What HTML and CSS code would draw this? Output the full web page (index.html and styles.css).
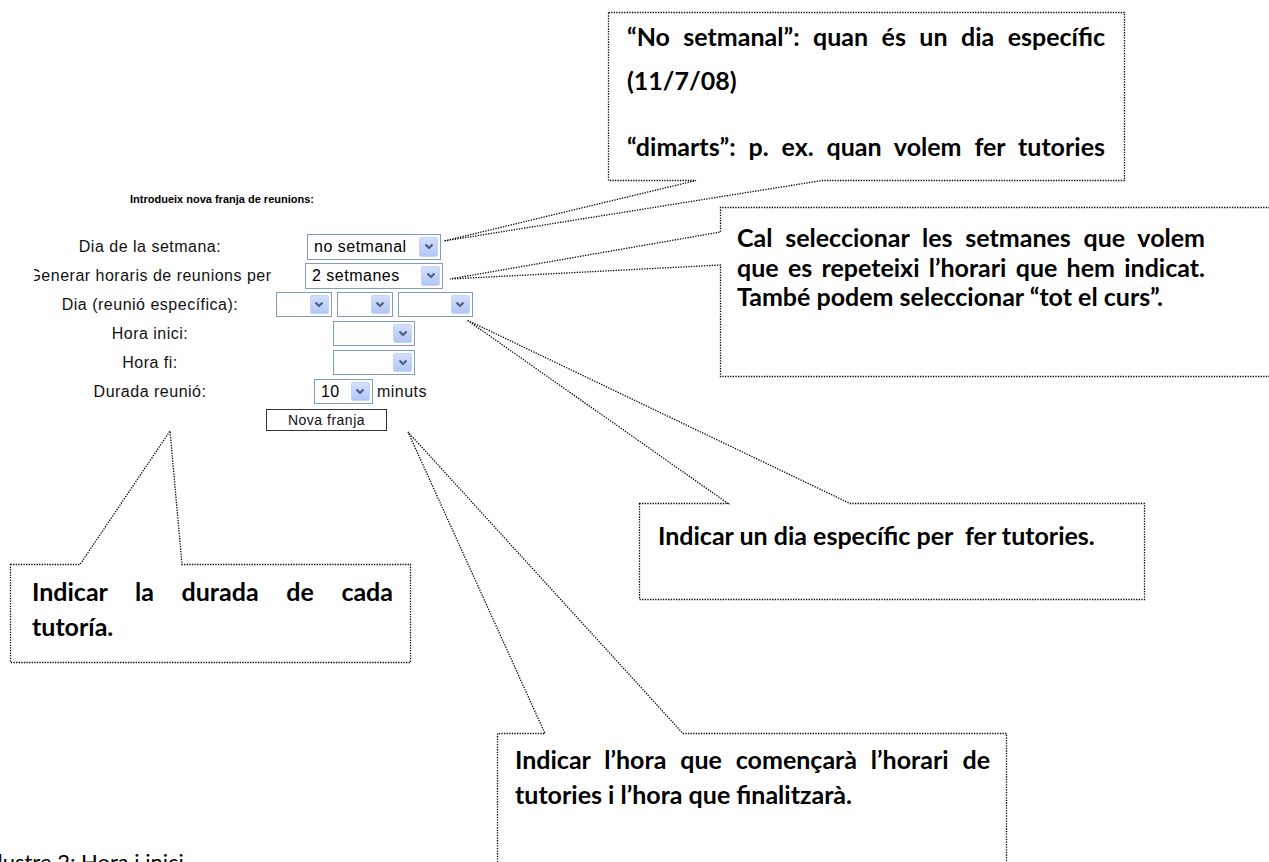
FILE: index.html
```html
<!DOCTYPE html>
<html>
<head>
  <title>Nova franja de reunions</title>
  <meta charset="utf-8">
  <link rel="stylesheet" href="styles.css">
</head>
<body>
<div class="page">

  <div class="shot">
    <h4 class="shot-title">Introdueix nova franja de reunions:</h4>

    <div class="form-grid">
      <div class="label">Dia de la setmana:</div>
      <div class="field">
        <div class="select" style="width:134px"><span class="val">no setmanal</span><span class="arrow"><svg viewBox="0 0 10 7"><path d="M1.5 1.5l3.5 3.5 3.5-3.5"/></svg></span></div>
      </div>

      <div class="label">Generar horaris de reunions per</div>
      <div class="field">
        <div class="select" style="width:138px"><span class="val">2 setmanes</span><span class="arrow"><svg viewBox="0 0 10 7"><path d="M1.5 1.5l3.5 3.5 3.5-3.5"/></svg></span></div>
      </div>

      <div class="label">Dia (reunió específica):</div>
      <div class="field gap5">
        <div class="select small" style="width:56px"><span class="val"></span><span class="arrow"><svg viewBox="0 0 10 7"><path d="M1.5 1.5l3.5 3.5 3.5-3.5"/></svg></span></div>
        <div class="select small" style="width:56px"><span class="val"></span><span class="arrow"><svg viewBox="0 0 10 7"><path d="M1.5 1.5l3.5 3.5 3.5-3.5"/></svg></span></div>
        <div class="select small" style="width:75px"><span class="val"></span><span class="arrow"><svg viewBox="0 0 10 7"><path d="M1.5 1.5l3.5 3.5 3.5-3.5"/></svg></span></div>
      </div>

      <div class="label">Hora inici:</div>
      <div class="field">
        <div class="select small" style="width:82px"><span class="val"></span><span class="arrow"><svg viewBox="0 0 10 7"><path d="M1.5 1.5l3.5 3.5 3.5-3.5"/></svg></span></div>
      </div>

      <div class="label">Hora fi:</div>
      <div class="field">
        <div class="select small" style="width:82px"><span class="val"></span><span class="arrow"><svg viewBox="0 0 10 7"><path d="M1.5 1.5l3.5 3.5 3.5-3.5"/></svg></span></div>
      </div>

      <div class="label">Durada reunió:</div>
      <div class="field durada">
        <div class="select small" style="width:59px"><span class="val">10</span><span class="arrow"><svg viewBox="0 0 10 7"><path d="M1.5 1.5l3.5 3.5 3.5-3.5"/></svg></span></div>
        <span class="unit">minuts</span>
      </div>

      <div class="field field-btn">
        <button class="btn">Nova franja</button>
      </div>
    </div>
  </div>

  <!-- callouts -->
  <div class="note note-1">
    <p class="p1">“No setmanal”: quan és un dia específic (11/7/08)</p>
    <p class="p2">“dimarts”: p. ex. quan volem fer tutories</p>
  </div>

  <div class="note note-2">
    <p>Cal seleccionar les setmanes que volem que es repeteixi l’horari que hem indicat. També podem seleccionar “tot el curs”.</p>
  </div>

  <div class="note note-3">
    <p>Indicar un dia específic per&nbsp; fer tutories.</p>
  </div>

  <div class="note note-4">
    <p>Indicar la durada de cada tutoría.</p>
  </div>

  <div class="note note-5">
    <p>Indicar l’hora que començarà l’horari de tutories i l’hora que finalitzarà.</p>
  </div>

  <svg class="pointers" width="1269" height="862" viewBox="0 0 1269 862">
    <path d="M608.5 12.5 H1124.5 V180.5 H822 L444 241 L696 180.5 H608.5 Z"/>
    <path d="M1280 207.5 H720.5 V232 L450 279 L720.5 265 V376.5 H1280"/>
    <path d="M639.5 503.5 H728 L467 320 L850 503.5 H1144.5 V599.5 H639.5 Z"/>
    <path d="M10.5 564.5 H80 L170 431 L182 564.5 H410.5 V662.5 H10.5 Z"/>
    <path d="M497.5 870 V733.5 H545 L408 432 L683 733.5 H1006.5 V870"/>
  </svg>

  <p class="caption">Il·lustre 2: Hora i inici</p>
</div>
</body>
</html>
```

FILE: styles.css
```css
body {
    margin: 0;
    background: #fff;
    font-family: "Liberation Sans", Arial, sans-serif;
    color: #000;
}

.page {
    position: relative;
    width: 1269px;
    height: 862px;
    overflow: hidden;
}

/* screenshot of the form */
.shot {
    width: 450px;
    margin-left: 34px;
    padding-top: 192px;
    overflow: hidden;
}

.shot-title {
    margin: 0 0 0 96px;
    font-size: 11px;
    line-height: 14px;
    font-weight: bold;
}

.form-grid {
    display: grid;
    grid-template-columns: 232px 216px;
    grid-auto-rows: 29px;
    margin-top: 26px;
}

.label {
    display: flex;
    justify-content: center;
    align-items: center;
    white-space: nowrap;
    font-size: 16px;
    letter-spacing: 0.5px;
    color: #111;
}

.field {
    display: flex;
    justify-content: center;
    align-items: center;
}

.gap5 {
    gap: 5px;
}

.durada {
    gap: 4px;
    padding-right: 7px;
}

.unit {
    font-size: 16px;
    letter-spacing: 0.5px;
    color: #111;
}

.select {
    display: flex;
    align-items: stretch;
    height: 26px;
    box-sizing: border-box;
    border: 1px solid #7f9db9;
    background: #fff;
    padding: 2px;
}

.select.small {
    height: 25px;
}

.val {
    flex: 1;
    padding-left: 4px;
    font-size: 16px;
    letter-spacing: 0.5px;
    line-height: 20px;
    white-space: nowrap;
    overflow: hidden;
}

.arrow {
    width: 19px;
    box-sizing: border-box;
    border: 1px solid #c4d4fb;
    border-radius: 2px;
    background: linear-gradient(#d2defc, #b2c6f6);
    display: flex;
    align-items: center;
    justify-content: center;
}

.arrow svg {
    width: 10px;
    height: 7px;
}

.arrow path {
    fill: none;
    stroke: #4d6185;
    stroke-width: 2.2;
}

.field-btn {
    grid-column: 2;
    justify-content: flex-start;
    align-items: flex-start;
    padding-top: 3px;
}

.btn {
    width: 121px;
    height: 22px;
    padding: 0;
    border: 1px solid #333;
    background: #fff;
    font-family: "Liberation Sans", Arial, sans-serif;
    font-size: 14px;
    letter-spacing: 0.5px;
    color: #111;
}

/* callouts */
.note {
    position: absolute;
    box-sizing: border-box;
    overflow: hidden;
    font-family: Lato, "Open Sans", sans-serif;
    font-weight: bold;
    font-size: 25px;
    color: #000;
}

.note p {
    margin: 0;
    text-align: justify;
}

.note-1 {
    left: 608px;
    top: 12px;
    width: 517px;
    height: 169px;
    padding: 2px 20px 0 19px;
}

.note-1 .p1 {
    line-height: 44px;
}

.note-1 .p2 {
    line-height: 44px;
    margin-top: 22px;
    text-align-last: justify;
}

.note-2 {
    left: 720px;
    top: 207px;
    width: 560px;
    height: 170px;
    padding: 16px 0 0 17px;
}

.note-2 p {
    width: 468px;
    line-height: 29.5px;
}

.note-3 {
    left: 639px;
    top: 503px;
    width: 506px;
    height: 97px;
    padding: 17px 0 0 19px;
    line-height: 30px;
}

.note-4 {
    left: 10px;
    top: 564px;
    width: 401px;
    height: 99px;
    padding: 10px 18px 0 22px;
    line-height: 35px;
}

.note-5 {
    left: 497px;
    top: 733px;
    width: 510px;
    height: 140px;
    padding: 9px 17px 0 18px;
    line-height: 35px;
}

.pointers {
    position: absolute;
    left: 0;
    top: 0;
    pointer-events: none;
}

.pointers path {
    fill: none;
    stroke: #000;
    stroke-width: 1.3;
    stroke-dasharray: 1.3 1.3;
}

.caption {
    position: absolute;
    left: -18px;
    top: 848px;
    margin: 0;
    font-family: Lato, "Open Sans", sans-serif;
    font-size: 22px;
    color: #000;
}
```
